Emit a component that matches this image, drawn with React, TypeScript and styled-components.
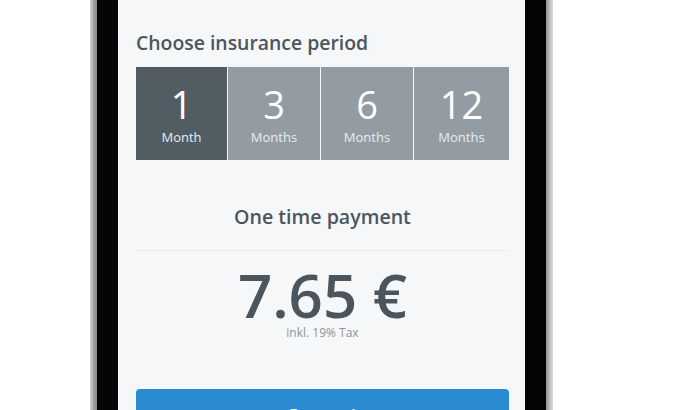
import React from 'react'
import styled, { createGlobalStyle } from 'styled-components'

const GlobalStyle = createGlobalStyle`
  html, body {
    margin: 0;
    padding: 0;
    background: #ffffff;
    font-family: 'Open Sans', 'Liberation Sans', sans-serif;
  }
`

const Page = styled.div`
  display: flex;
  height: 410px;
  overflow: hidden;
  padding-left: 90px;
`

const Frame = styled.div`
  display: flex;
  width: 463px;
  height: 410px;
  padding: 0 7px;
  box-sizing: border-box;
  background: linear-gradient(
    90deg,
    #d4d4d6 0px,
    #a9a9ac 3px,
    #8c8c90 6px,
    #8c8c90 456px,
    #b6b6b9 459px,
    #dcdcde 463px
  );
`

const Bezel = styled.div`
  flex: 1;
  display: flex;
  padding: 0 21px;
  background: #050505;
`

const Screen = styled.div`
  flex: 1;
  display: flex;
  flex-direction: column;
  padding: 31px 16px 0 18px;
  background: #f6f7f9;
  color: #4b555d;
  overflow: hidden;

  & > * {
    flex-shrink: 0;
  }
`

const Title = styled.h2`
  margin: 0 0 12px;
  font-size: 19.4px;
  line-height: 24px;
  font-weight: 600;
  color: #4b555d;
`

const Periods = styled.div`
  display: grid;
  grid-template-columns: 91px 92px 92px 1fr;
  gap: 1px;
  height: 93px;
  background: #f6f7f9;
`

const Period = styled.div<{ $active?: boolean }>`
  display: flex;
  flex-direction: column;
  align-items: center;
  justify-content: center;
  background: ${p => (p.$active ? '#525c63' : '#939ca2')};
  color: #ffffff;
`

const PeriodValue = styled.span`
  font-size: 38px;
  line-height: 40px;
  font-weight: 400;
  margin-top: 2px;
`

const PeriodUnit = styled.span`
  font-size: 13px;
  line-height: 18px;
  font-weight: 400;
  color: #e9ecee;
  margin-top: 4px;
`

const Subtitle = styled.h3`
  margin: 44px 0 0;
  padding-bottom: 20px;
  text-align: center;
  font-size: 19.6px;
  line-height: 26px;
  font-weight: 600;
  color: #4b555d;
  border-bottom: 1px solid #e7e9eb;
`

const Price = styled.div`
  margin-top: 15px;
  text-align: center;
  font-size: 60px;
  line-height: 58px;
  font-weight: 600;
  color: #4b555d;
`

const Tax = styled.div`
  margin-top: 1px;
  text-align: center;
  font-size: 12px;
  line-height: 16px;
  color: #8d949a;
`

const Button = styled.button`
  margin-top: 48px;
  height: 48px;
  border: none;
  border-radius: 4px;
  background: #2a8bd3;
  color: #ffffff;
  font-family: inherit;
  font-size: 17px;
  font-weight: 600;
  padding-top: 4px;
  cursor: pointer;
`

const periods = [
  { value: '1', unit: 'Month' },
  { value: '3', unit: 'Months' },
  { value: '6', unit: 'Months' },
  { value: '12', unit: 'Months' }
]

export default function App() {
  const [selected, setSelected] = React.useState(0)

  return (
    <>
      <GlobalStyle />
      <Page>
        <Frame>
          <Bezel>
            <Screen>
              <Title>Choose insurance period</Title>
              <Periods>
                {periods.map((period, index) => (
                  <Period
                    key={period.value}
                    $active={index === selected}
                    onClick={() => setSelected(index)}>
                    <PeriodValue>{period.value}</PeriodValue>
                    <PeriodUnit>{period.unit}</PeriodUnit>
                  </Period>
                ))}
              </Periods>
              <Subtitle>One time payment</Subtitle>
              <Price>7.65 €</Price>
              <Tax>inkl. 19% Tax</Tax>
              <Button>Proceed</Button>
            </Screen>
          </Bezel>
        </Frame>
      </Page>
    </>
  )
}
